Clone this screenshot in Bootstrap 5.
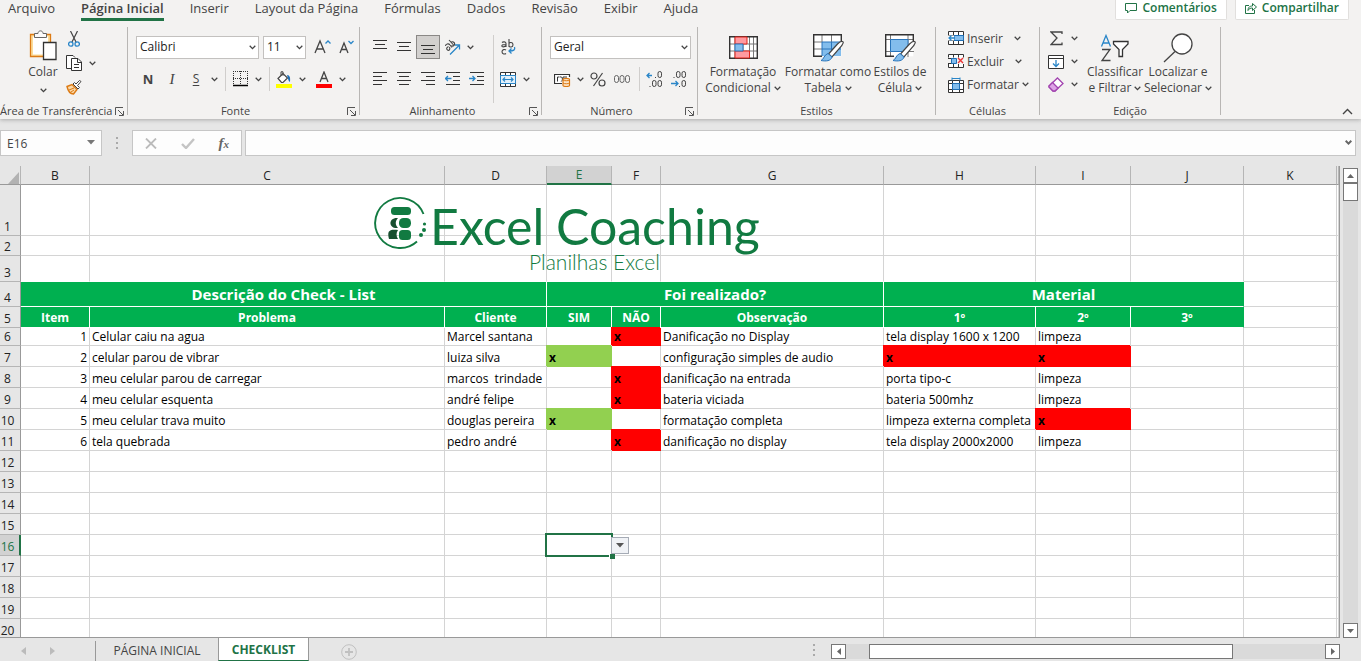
<!DOCTYPE html>
<html lang="pt-BR">
<head>
<meta charset="utf-8">
<meta name="viewport" content="width=device-width, initial-scale=1">
<title>Checklist - Excel Coaching</title>
<link href="https://cdn.jsdelivr.net/npm/bootstrap@5.3.0/dist/css/bootstrap.min.css" rel="stylesheet">
<style>
  :root { --ink:#444; --line:#d4d4d4; --edge:#999; --brand:#217346; --fill:#00b050; }
  body { font-family:"Open Sans","Noto Sans",sans-serif; font-size:12px; line-height:16px; color:var(--ink); background:#e6e6e6; }
  button { border:0; background:none; padding:0; color:inherit; }
  svg { display:block; flex:none; }
  .caret { display:inline-block; width:7px; height:5px; fill:none; stroke:#444; stroke-width:1.3; vertical-align:middle; }

  .ribbon { background:#f3f2f1; box-shadow:0 1px 4px #aaa; height:119px; }
  .menu-tabs { height:26px; }
  .menu-list { gap:26px; }
  .menu-tabs .tab-link { color:var(--ink); text-decoration:none; font-size:13px; line-height:17px; height:21px; white-space:nowrap; }
  .menu-tabs .active-tab { font-weight:600; border-bottom:3px solid var(--brand); }
  .top-btn { background:#fff; border:1px solid #e1dfdd; border-top:0; border-radius:0 0 2px 2px; color:var(--brand); font-weight:600; font-size:12px; height:20px; padding:0 9px 3px; gap:5px; }

  .grp { display:flex; flex-direction:column; flex:none; border-right:1px solid #b8b6b4; height:88px; margin-top:1px; }
  .grp-body { height:76px; display:flex; flex:none; }
  .grp-foot { height:16px; flex:none; display:flex; align-items:center; font-size:11px; position:relative; white-space:nowrap; }
  .grp-foot span { flex:1; text-align:center; }
  .launch { position:absolute; right:3px; bottom:3px; }
  .g-clip { width:128px; } .g-font { width:232px; } .g-align { width:182px; } .g-num { width:156px; }
  .g-style { width:238px; } .g-cell { width:104px; } .g-edit { width:181px; }
  .ico { width:24px; height:24px; display:flex; align-items:center; justify-content:center; flex:none; }
  .drop { width:12px; height:24px; display:flex; align-items:center; justify-content:center; flex:none; }
  .pressed { background:#d2d0ce; border:1px solid #8a8886; }
  .bar-sep { width:1px; background:#d0cecc; margin:0 2px 0 5px; flex:none; }
  .tools { display:flex; align-items:center; height:24px; }
  .picker { position:relative; height:23px; }
  .picker select { appearance:none; width:100%; height:23px; border:1px solid #c3c1bf; border-radius:0; background:#fff; font-size:12px; padding:0 3px; color:#222; display:block; }
  .picker .caret { position:absolute; right:3px; top:9px; pointer-events:none; }
  .p-name { width:123px; } .p-size { width:43px; } .p-num { width:141px; }
  .big { display:flex; flex-direction:column; align-items:center; line-height:16px; white-space:nowrap; font-size:12px; flex:none; }
  .big .pic { height:33px; display:flex; align-items:center; }
  .paste { width:38px; } .paste .pic { height:37px; }
  .w-a { width:82px; } .w-b { width:88px; } .w-c { width:56px; } .w-d { width:62px; } .w-e { width:64px; }
  .line-btn { display:flex; align-items:center; height:23px; gap:3px; }
  .glyph-b { font-size:13px; font-weight:700; } .glyph-i { font-family:"Liberation Serif",serif; font-style:italic; font-size:15px; }
  .glyph-u { font-size:12px; text-decoration:underline; text-underline-offset:2px; }

  .formula { height:26px; margin-top:11px; padding-right:5px; }
  .formula .box { background:#fdfdfd; border:1px solid #c6c6c6; border-radius:0; height:26px; }
  .name-box { width:102px; position:relative; }
  .name-box input { width:80px; border:0; background:none; padding:0 6px; height:24px; color:#444; }
  .name-box svg { position:absolute; right:6px; top:9px; }
  .grip { width:30px; }
  .fx-box { width:110px; }
  .fx { font-family:"Liberation Serif",serif; font-style:italic; font-weight:700; font-size:15px; color:#666; }
  .fx small { font-size:11px; }
  .entry { position:relative; margin-left:3px; }
  .entry input { width:100%; padding:0 6px; }
  .entry .caret { position:absolute; right:4px; top:10px; stroke:#666; stroke-width:2; }

  .work { margin-top:10px; min-height:0; }
  .pane { overflow:hidden; position:relative; border-right:1px solid var(--edge); border-bottom:1px solid var(--edge); background:#fff; min-width:0; }
  .sheet { table-layout:fixed; width:100%; border-collapse:separate; border-spacing:0; color:#000; font-size:12px; }
  .sheet th, .sheet td { padding:0 2px; height:21px; line-height:17px; vertical-align:bottom; border-right:1px solid var(--line); border-bottom:1px solid var(--line); white-space:nowrap; }
  .sheet thead th { height:19px; line-height:16px; background:#e6e6e6; border-right-color:#b5b5b5; border-bottom-color:var(--edge); font-weight:400; text-align:center; color:#222; }
  .sheet tbody th { background:#e6e6e6; border-color:#b5b5b5; border-right-color:var(--edge); font-weight:400; text-align:center; padding:0 5px 0 0; color:#222; }
  .sheet thead th.hot { background:#d2d2d2; color:var(--brand); border-bottom:2px solid var(--brand); }
  .sheet tbody th.hot { background:#d2d2d2; color:var(--brand); border-right:2px solid var(--brand); padding-right:4px; }
  .sheet .c0{width:21px}.sheet .cB{width:69px}.sheet .cC{width:355px}.sheet .cD{width:102px}.sheet .cE{width:65px}.sheet .cF{width:49px}
  .sheet .cG{width:223px}.sheet .cH{width:152px}.sheet .cI{width:95px}.sheet .cJ{width:113px}.sheet .cK{width:93px}
  .sheet .r1 > * { height:51px; } .sheet .r2 > * { height:20px; } .sheet .r3 > * { height:26px; }
  .sheet .r4 > * { height:25px; } .sheet .r6 > * { height:18px; }
  .sheet .r3 td:not(:last-child):not(:nth-last-child(2)) { border-bottom-color:#fff; }
  .sheet td.head { background:var(--fill); color:#fff; border-color:#fff; font-weight:700; text-align:center; }
  .sheet .r4 td.head { font-size:15px; line-height:23px; }
  .sheet .r5 td.head { line-height:18px; }
  .sheet td.no { background:#f00; border-color:#f00; box-shadow:-1px -1px 0 #f00; font-weight:700; }
  .sheet td.yes { background:#92d050; border-color:#92d050; box-shadow:-1px -1px 0 #92d050; font-weight:700; }
  .sheet td.last-head { border-right-color:var(--fill); }
  .cell-host { position:relative; overflow:visible; }
  .cursor-box { position:absolute; left:-2px; top:-2px; right:-2px; bottom:-2px; border:2px solid var(--brand); }
  .cursor-box::after { content:""; position:absolute; right:-4px; bottom:-4px; width:6px; height:6px; background:var(--brand); border-left:1px solid #fff; border-top:1px solid #fff; }
  .cell-drop { position:absolute; left:100%; top:2px; width:18px; height:17px; border:1px solid #a5abb5; background:#f0f2f6; display:flex; align-items:center; justify-content:center; z-index:1; }
  .logo { position:absolute; left:370px; top:28px; }

  .v-scroll { width:21px; padding:2px 3px 0; }
  .sq { width:15px; height:15px; background:#fff; border:1px solid #777; display:flex; align-items:center; justify-content:center; flex:none; }
  .track { background:#dadada; }
  .v-thumb { background:#fff; border:1px solid #777; height:18px; }
  .sheet-bar { height:23px; font-size:12px; }
  .sheet-tab { height:23px; display:flex; align-items:center; justify-content:center; padding-top:2px; color:#444; text-decoration:none; }
  .t-nav { width:96px; padding:0 40px 0 21px; border-right:1px solid var(--edge); margin-top:3px; }
  .t-one { width:122px; }
  .t-two { width:91px; background:#fff; color:var(--brand); font-weight:700; border-left:1px solid var(--edge); border-right:1px solid var(--edge); border-bottom:1px solid var(--brand); }
  .h-scroll { width:509px; margin:6px 21px 0 0; height:15px; }
  .h-thumb { background:#fff; border:1px solid #777; height:15px; margin-left:23px; width:364px; }
</style>
</head>
<body>
<svg width="0" height="0" class="position-absolute" aria-hidden="true">
  <symbol id="car" viewBox="0 0 7 5"><path d="M.7.8 3.5 3.6 6.3.8"/></symbol>
  <symbol id="lau" viewBox="0 0 9 9"><path d="M.5 8V.5H8M3 3l5 5M8.500 4v4.500H4" fill="none" stroke="#555"/></symbol>
</svg>
<div class="d-flex flex-column vh-100 overflow-hidden">
  <header class="ribbon flex-shrink-0 position-relative">
    <nav class="menu-tabs d-flex align-items-start ps-2">
      <div class="menu-list d-flex flex-grow-1">
        <a class="tab-link" href="#">Arquivo</a>
        <a class="tab-link active-tab" href="#">Página Inicial</a>
        <a class="tab-link" href="#">Inserir</a>
        <a class="tab-link" href="#">Layout da Página</a>
        <a class="tab-link" href="#">Fórmulas</a>
        <a class="tab-link" href="#">Dados</a>
        <a class="tab-link" href="#">Revisão</a>
        <a class="tab-link" href="#">Exibir</a>
        <a class="tab-link" href="#">Ajuda</a>
      </div>
      <div class="d-flex gap-2 pe-2 me-1">
        <button class="top-btn d-flex align-items-center"><svg width="12" height="11" fill="none" stroke="#217346"><path d="M.5.5h11v7H5L2.500 10V7.500h-2z"/></svg>Comentários</button>
        <button class="top-btn d-flex align-items-center"><svg width="12" height="12" fill="none" stroke="#217346"><path d="M4 3.500H.5v8h9V8M3 8.500C3 5 5 4 7.500 4V1.500l4 3.500-4 3.500V6C5.500 6 4 6.500 3 8.500z"/></svg>Compartilhar</button>
      </div>
    </nav>
    <div class="d-flex">
      <section class="grp g-clip">
        <div class="grp-body">
          <button class="big paste ms-4"><span class="pic"><svg width="28" height="31" viewBox="0 0 28 31"><path d="M1.500 4.500h20v22h-20z" fill="#fbdc9a" stroke="#dc7a14" stroke-width="1.300"/><path d="M4 6.500h15v18H4z" fill="#fff"/><path d="M5.500 7.500v-4H9C9 0 14 0 14 3.500h3.500v4z" fill="#fafafa" stroke="#666"/><path d="M14.500 12.500h12.500v17H14.500z" fill="#fff" stroke="#333" stroke-width="1.300"/></svg></span>Colar<svg class="caret mt-2"><use href="#car"/></svg></button>
          <div>
            <button class="ico" aria-label="Recortar"><svg width="12" height="17" viewBox="0 0 12 17" fill="none"><path d="M2.500 0l5.500 11M9.500 0L4 11" stroke="#444" stroke-width="1.200"/><circle cx="2.800" cy="13" r="2.200" stroke="#2a86c8" stroke-width="1.300"/><circle cx="9.200" cy="13" r="2.200" stroke="#2a86c8" stroke-width="1.300"/></svg></button>
            <div class="d-flex"><button class="ico" aria-label="Copiar"><svg width="16" height="16" viewBox="0 0 16 16" fill="#fff" stroke="#333"><path d="M5.500 13.500h-5V.5H7l2 2"/><path d="M5.500 3.500H12l3.500 3.500v8.500h-10z"/><path d="M11.500 4v3.500H15M8 9.500h5M8 12.500h5" fill="none"/></svg></button><button class="drop" aria-label="Opções"><svg class="caret"><use href="#car"/></svg></button></div>
            <button class="ico" aria-label="Pincel"><svg width="16" height="15" viewBox="0 0 16 15"><path d="M1 6.500l5-2 5 5-3.500 4.500c-3 0-5.500-3-6.500-7.500z" fill="#fbd9a8" stroke="#dc7a14" stroke-width="1.400"/><path d="M3 10l5-2M5 12l3-2" stroke="#dc7a14"/><path d="M7 4l5 5 1.500-1.500-2-2L15 1.500 13.500.5 10 4 8.500 2.500z" fill="#fff" stroke="#444"/></svg></button>
          </div>
        </div>
        <div class="grp-foot"><span class="pe-3 me-1">Área de Transferência</span><svg class="launch" width="9" height="9"><use href="#lau"/></svg></div>
      </section>

      <section class="grp g-font">
        <div class="grp-body flex-column ps-2 pt-2">
          <div class="tools">
            <div class="picker p-name me-1"><select aria-label="Fonte"><option>Calibri</option></select><svg class="caret"><use href="#car"/></svg></div>
            <div class="picker p-size me-1"><select aria-label="Tamanho"><option>11</option></select><svg class="caret"><use href="#car"/></svg></div>
            <button class="ico" aria-label="Aumentar fonte"><svg width="17" height="16" fill="none"><path d="M1 14L6 2l5 12M2.800 10h6.400" stroke="#444" stroke-width="1.300"/><path d="M11.500 4.500L14 2l2.500 2.500" stroke="#2a86c8" stroke-width="1.300"/></svg></button>
            <button class="ico" aria-label="Diminuir fonte"><svg width="15" height="16" fill="none"><path d="M1 14L5 4l4 10M2.500 10.500h5" stroke="#444" stroke-width="1.300"/><path d="M9.500 2L12 4.500 14.500 2" stroke="#2a86c8" stroke-width="1.300"/></svg></button>
          </div>
          <div class="tools mt-2">
            <button class="ico glyph-b">N</button><button class="ico glyph-i">I</button><button class="ico glyph-u">S</button><button class="drop" aria-label="Opções"><svg class="caret"><use href="#car"/></svg></button>
            <i class="bar-sep align-self-stretch"></i>
            <button class="ico" aria-label="Bordas"><svg width="15" height="16" fill="none" stroke="#333"><path d="M.5 0v13M14.500 0v13M7.500 0v13M0 .5h15M0 7.500h15" stroke-dasharray="1 1"/><path d="M0 14.500h15" stroke="#000" stroke-width="1.500"/></svg></button><button class="drop" aria-label="Opções"><svg class="caret"><use href="#car"/></svg></button>
            <i class="bar-sep align-self-stretch"></i>
            <button class="ico" aria-label="Preenchimento"><svg width="16" height="17"><path d="M2 7.500L7 2.500l4.500 4.500L7 11.500H5.500z" fill="#fff" stroke="#444" stroke-width="1.200"/><path d="M5 4.500V.8h2v4" fill="none" stroke="#444"/><path d="M11 4c3 0 3.500 3 3 7-2-1-2-4-3-7z" fill="#1f6fb5"/><path d="M0 13h16v4H0z" fill="#ff0"/></svg></button><button class="drop" aria-label="Opções"><svg class="caret"><use href="#car"/></svg></button>
            <button class="ico ms-1" aria-label="Cor da fonte"><svg width="16" height="17"><path d="M4 11L8 1l4 10M5.500 7.500h5" fill="none" stroke="#444" stroke-width="1.300"/><path d="M0 13h16v4H0z" fill="red"/></svg></button><button class="drop" aria-label="Opções"><svg class="caret"><use href="#car"/></svg></button>
          </div>
        </div>
        <div class="grp-foot"><span class="pe-3">Fonte</span><svg class="launch" width="9" height="9"><use href="#lau"/></svg></div>
      </section>

      <section class="grp g-align">
        <div class="grp-body ps-2 pt-2">
          <div>
            <div class="tools">
              <button class="ico" aria-label="Superior"><svg width="14" height="16" stroke="#333"><path d="M0 1.500h14M2 5.500h10M0 9.500h14"/></svg></button>
              <button class="ico" aria-label="Meio"><svg width="14" height="16" stroke="#333"><path d="M0 3.500h14M2 7.500h10M0 11.500h14"/></svg></button>
              <button class="ico pressed" aria-label="Inferior"><svg width="14" height="16" stroke="#333"><path d="M0 6.500h14M2 10.500h10M0 14.500h14"/></svg></button>
              <button class="ico" aria-label="Orientação"><svg width="17" height="16" fill="none"><g stroke="#444" stroke-width="1.100"><path d="M1.500 7c0-2 3-3 4.500-1l2 2.500M4.500 7.500c-2 1-2.500 2.500-1 3.500s3-.5 2-3"/><path d="M5 1l5 5.500M7 3.500c2-2 5 1 3 3-1 .8-2 .5-2.500 0"/></g><path d="M6 15.500L15.500 6M11 6h4.500v4.500" stroke="#2a86c8" stroke-width="1.300"/></svg></button><button class="drop" aria-label="Opções"><svg class="caret"><use href="#car"/></svg></button>
            </div>
            <div class="tools mt-2">
              <button class="ico" aria-label="Esquerda"><svg width="14" height="14" stroke="#333"><path d="M0 .5h14M0 4.500h9M0 8.500h14M0 12.500h9"/></svg></button>
              <button class="ico" aria-label="Centro"><svg width="14" height="14" stroke="#333"><path d="M0 .5h14M2 4.500h10M0 8.500h14M2 12.500h10"/></svg></button>
              <button class="ico" aria-label="Direita"><svg width="14" height="14" stroke="#333"><path d="M0 .5h14M5 4.500h9M0 8.500h14M5 12.500h9"/></svg></button>
              <button class="ico" aria-label="Diminuir recuo"><svg width="15" height="14" stroke="#333" fill="none"><path d="M1 .5h14M8 4.500h7M8 8.500h7M1 12.500h14"/><path d="M6.500 6.500h-6M3 4L.5 6.500 3 9" stroke="#2a86c8" stroke-width="1.300"/></svg></button>
              <button class="ico" aria-label="Aumentar recuo"><svg width="15" height="14" stroke="#333" fill="none"><path d="M1 .5h14M8 4.500h7M8 8.500h7M1 12.500h14"/><path d="M0 6.500h6M3.500 4L6 6.500 3.500 9" stroke="#2a86c8" stroke-width="1.300"/></svg></button>
            </div>
          </div>
          <i class="bar-sep"></i>
          <div>
            <div class="tools"><button class="ico" aria-label="Quebrar texto"><svg width="15" height="16" fill="none"><g stroke="#444" stroke-width="1.100"><path d="M1 3.500c1-1 4-1 4 1V8M5 5.500C2 5.500.8 6 .8 7S3.500 8.500 5 6.500M8 0v8M8 4.500c.5-1.500 4-1.500 4 1.200s-3.500 3-4 1.200M5 11c-1-.8-4-.8-4 1.800s3 2.600 4 1.700"/></g><path d="M13.500 8c1 3-1 4-5 4M10.500 9.500L8 12l2.500 2.500" stroke="#2a86c8" stroke-width="1.300"/></svg></button></div>
            <div class="tools mt-2"><button class="ico" aria-label="Mesclar"><svg width="16" height="15" fill="#fff" stroke="#333"><path d="M.5.5h15v14H.5zM5.500 0v3M10.500 0v3M5.500 12v3M10.500 12v3"/><path d="M.5 3.500h15v8H.5z" fill="#e3f1fb" stroke="#2a86c8"/><path d="M3 7.500h10M5 5.500l-2 2 2 2M11 5.500l2 2-2 2" stroke="#2a86c8" stroke-width="1.200" fill="none"/></svg></button><button class="drop" aria-label="Opções"><svg class="caret"><use href="#car"/></svg></button></div>
          </div>
        </div>
        <div class="grp-foot"><span class="pe-3">Alinhamento</span><svg class="launch" width="9" height="9"><use href="#lau"/></svg></div>
      </section>

      <section class="grp g-num">
        <div class="grp-body flex-column ps-2 pt-2">
          <div class="tools"><div class="picker p-num"><select aria-label="Formato"><option>Geral</option></select><svg class="caret"><use href="#car"/></svg></div></div>
          <div class="tools mt-2">
            <button class="ico" aria-label="Moeda"><svg width="17" height="15" viewBox="0 0 17 15"><path d="M15.500 5V2.500H.5v9H8" fill="#fff" stroke="#333" stroke-width="1.200"/><path d="M5.500 5h-2v4.500M6 5c3-1 3 4 1 4.500M9 8V5h4" fill="none" stroke="#333"/><path d="M9 7.500c0-1.500 6.500-1.500 6.500 0v6c0 1.300-6.500 1.300-6.500 0z" fill="#fce5c8" stroke="#dc7a14" stroke-width="1.200"/><path d="M9 8c1 1 5.500 1 6.500 0M9 11c1 1 5.500 1 6.500 0" stroke="#dc7a14" fill="none"/></svg></button><button class="drop" aria-label="Opções"><svg class="caret"><use href="#car"/></svg></button>
            <button class="ico" aria-label="Porcentagem"><svg width="16" height="15" fill="none" stroke="#444" stroke-width="1.200"><circle cx="4" cy="4" r="3"/><circle cx="12" cy="11" r="3"/><path d="M12.500 1L3.500 14"/></svg></button>
            <button class="ico" aria-label="Milhar"><svg width="16" height="9" fill="none" stroke="#666"><rect x=".5" y=".5" width="4" height="7" rx="2"/><rect x="6" y=".5" width="4" height="7" rx="2"/><rect x="11.500" y=".5" width="4" height="7" rx="2"/></svg></button>
            <i class="bar-sep align-self-stretch"></i>
            <button class="ico" aria-label="Aumentar casas"><svg width="17" height="16" fill="none" stroke="#444"><path d="M6 4.500H1M3.500 2L1 4.500 3.500 7" stroke="#2a86c8" stroke-width="1.300"/><rect x="12" y=".5" width="3.500" height="6" rx="1.700"/><rect x="6.500" y="9.500" width="3.500" height="6" rx="1.700"/><rect x="12" y="9.500" width="3.500" height="6" rx="1.700"/><path d="M9.500 6v1M4 15v1"/></svg></button>
            <button class="ico" aria-label="Diminuir casas"><svg width="17" height="16" fill="none" stroke="#444"><path d="M1 12.500h7M5.500 10L8 12.500 5.500 15" stroke="#2a86c8" stroke-width="1.300"/><rect x="6.500" y=".5" width="3.500" height="6" rx="1.700"/><rect x="12" y=".5" width="3.500" height="6" rx="1.700"/><rect x="12" y="9.500" width="3.500" height="6" rx="1.700"/><path d="M4 6v1M9.500 15v1"/></svg></button>
          </div>
        </div>
        <div class="grp-foot"><span class="pe-3">Número</span><svg class="launch" width="9" height="9"><use href="#lau"/></svg></div>
      </section>

      <section class="grp g-style">
        <div class="grp-body ps-1 pt-1">
          <button class="big w-a"><span class="pic"><svg width="29" height="23" viewBox="0 0 29 23"><path d="M.7.7h27.600v21.600H.7z" fill="#fff"/><path d="M6 0v23M14 0v23M20.500 0v23M24.500 0v23M0 8h29M0 15h29" stroke="#777"/><path d="M.7.7h27.600v21.600H.7z" fill="none" stroke="#333" stroke-width="1.400"/><path d="M6 1h12v7H6zM6 15h14.500v7H6z" fill="#ff9aa0" stroke="#e0241b"/><path d="M6 8h8v7H6z" fill="#83bdec" stroke="#2a75bb"/></svg></span><span>Formatação</span><span>Condicional <svg class="caret"><use href="#car"/></svg></span></button>
          <button class="big w-b"><span class="pic"><svg width="31" height="28" viewBox="0 0 31 28"><path d="M.7.7h27.600v21.600H.7z" fill="#fff"/><path d="M9 8h19v14H9z" fill="#83bdec"/><path d="M9 0v8M18.500 0v8M0 8h9M0 15h9" stroke="#777"/><path d="M9 22V8h19M18.500 8v14M9 15h19" stroke="#2a75bb" fill="none"/><path d="M28.300 8V.7H.7v21.600H9" fill="none" stroke="#333" stroke-width="1.400"/><path d="M29.500 7.500c1.500.5.5 2-1 4.500L19 23l-3.500-3 9-10c2-2 3.500-3 5-2.500z" fill="#fff" stroke="#444" stroke-width="1.200"/><path d="M15 19.500l4 3.500c-1 4-6 4.500-11 3.500 3-1 3-6 7-7z" fill="#83bdec" stroke="#2a75bb"/></svg></span><span>Formatar como</span><span>Tabela <svg class="caret"><use href="#car"/></svg></span></button>
          <button class="big w-c"><span class="pic"><svg width="31" height="28" viewBox="0 0 31 28"><path d="M.7.7h27.600v21.600H.7z" fill="#fff"/><path d="M5.500 0v23M23 0v23M0 5.500h29M0 17.500h29" stroke="#777"/><path d="M5.500 5.500H23v12H5.500z" fill="#83bdec" stroke="#2a75bb"/><path d="M28.300 8V.7H.7v21.600H9" fill="none" stroke="#333" stroke-width="1.400"/><path d="M29.500 7.500c1.500.5.5 2-1 4.500L19 23l-3.500-3 9-10c2-2 3.500-3 5-2.500z" fill="#fff" stroke="#444" stroke-width="1.200"/><path d="M15 19.500l4 3.500c-1 4-6 4.500-11 3.500 3-1 3-6 7-7z" fill="#83bdec" stroke="#2a75bb"/></svg></span><span>Estilos de</span><span>Célula <svg class="caret"><use href="#car"/></svg></span></button>
        </div>
        <div class="grp-foot"><span>Estilos</span></div>
      </section>

      <section class="grp g-cell">
        <div class="grp-body flex-column ps-2 ms-0">
          <button class="line-btn ps-1"><svg width="16" height="15" fill="#fff" stroke="#333"><path d="M.5.5h15v13H.5zM5.500.5v13M10.500.5v13M0 4.500h16M0 9.500h16"/><path d="M6 4.500h9.500v5H6z" fill="#83bdec" stroke="#1f6fb5"/><path d="M0 4.500h6v5H0z" stroke="none"/><path d="M7 7H1M3.500 4.500L1 7l2.500 2.500" stroke="#2a86c8" stroke-width="1.300" fill="none"/></svg>Inserir <svg class="caret ms-2"><use href="#car"/></svg></button>
          <button class="line-btn ps-1"><svg width="16" height="15" fill="#fff" stroke="#333"><path d="M.5 3.500v-3h15v3M.5 10v3.500h15V10M5.500.5v3M10.500.5v3M5.500 10v3.500M10.500 10v3.500M0 4.500h4M0 9.500h4"/><path d="M3.500 4.500h5v5h-5z" fill="#83bdec" stroke="#1f6fb5"/><path d="M10 4l5 5M15 4l-5 5" stroke="#e33" stroke-width="1.400"/></svg>Excluir <svg class="caret ms-2"><use href="#car"/></svg></button>
          <button class="line-btn ps-1"><svg width="16" height="16" fill="#fff" stroke="#333"><path d="M.5 3.500h15v12H.5zM4.500 3.500v12M11.500 3.500v12M0 6.500h16M0 12.500h16"/><path d="M4.500 6.500h7v6h-7z" fill="#83bdec" stroke="#1f6fb5"/><path d="M4 .5v3M12 .5v3M4 1.500h8" stroke="#2a86c8"/></svg>Formatar<svg class="caret"><use href="#car"/></svg></button>
        </div>
        <div class="grp-foot"><span>Células</span></div>
      </section>

      <section class="grp g-edit">
        <div class="grp-body ps-1">
          <div>
            <div class="line-btn gap-0"><button class="ico" aria-label="Soma"><svg width="13" height="15" fill="none" stroke="#444" stroke-width="1.300"><path d="M12 3V1H1l6 6-6 6.500h11v-2"/></svg></button><button class="drop" aria-label="Opções"><svg class="caret"><use href="#car"/></svg></button></div>
            <div class="line-btn gap-0"><button class="ico" aria-label="Preencher"><svg width="16" height="14" fill="#fff" stroke="#333"><path d="M.5.500h15v13H.5zM0 3.500h16"/><path d="M8 5v6M5 8.500l3 3 3-3" fill="none" stroke="#2a86c8" stroke-width="1.300"/></svg></button><button class="drop" aria-label="Opções"><svg class="caret"><use href="#car"/></svg></button></div>
            <div class="line-btn gap-0"><button class="ico" aria-label="Limpar"><svg width="16" height="15" stroke="#a244b0" stroke-width="1.300"><path d="M9.500 1L15 6.500 7 14H5L1 10V9z" fill="#fff"/><path d="M4.500 5.500L10 11l-3 3H5L1 10V9z" fill="#dda3e6"/></svg></button><button class="drop" aria-label="Opções"><svg class="caret"><use href="#car"/></svg></button></div>
          </div>
          <button class="big w-d ms-1 pt-1"><span class="pic"><svg width="30" height="28" fill="none" stroke-width="1.300"><path d="M1.500 12.500l4.500-11 4.500 11M3 9h6" stroke="#2a86c8"/><path d="M2 15.500h8L2 26.500h8.500" stroke="#444"/><path d="M13.500 7.500h14.500v2.500l-5.500 5.500v7h-3.500v-7L13.500 10z" fill="#fff" stroke="#333"/></svg></span><span>Classificar</span><span>e Filtrar <svg class="caret"><use href="#car"/></svg></span></button>
          <button class="big w-e pt-1"><span class="pic"><svg width="30" height="30" stroke="#444" stroke-width="1.300"><circle cx="19" cy="11" r="10" fill="#fff"/><path d="M12 18.500L1 29"/></svg></span><span>Localizar e</span><span>Selecionar <svg class="caret"><use href="#car"/></svg></span></button>
        </div>
        <div class="grp-foot"><span>Edição</span></div>
      </section>
      <button class="ms-auto me-2 align-self-end" aria-label="Recolher"><svg width="11" height="7" fill="none" stroke="#444" stroke-width="1.400"><path d="M1 6l4.500-4.500L10 6"/></svg></button>
    </div>
  </header>

  <div class="formula d-flex flex-shrink-0">
    <div class="box name-box"><input aria-label="Caixa de nome" value="E16"><svg width="8" height="5"><path d="M0 0h8L4 4.500z" fill="#777"/></svg></div>
    <div class="grip d-flex align-items-center justify-content-center"><svg width="2" height="12" fill="#aaa"><path d="M0 0h2v2H0zM0 5h2v2H0zM0 10h2v2H0z"/></svg></div>
    <div class="box fx-box d-flex align-items-center justify-content-around">
      <button aria-label="Cancelar"><svg width="12" height="11" stroke="#bbb" stroke-width="1.800"><path d="M1 .5l10 10M11 .5l-10 10"/></svg></button>
      <button aria-label="Inserir"><svg width="14" height="11" fill="none" stroke="#c4c4c4" stroke-width="2.400"><path d="M1 6l4 4 8-9"/></svg></button>
      <button class="fx">f<small>x</small></button>
    </div>
    <div class="entry flex-grow-1"><input class="box" aria-label="Barra de fórmulas"><svg class="caret"><use href="#car"/></svg></div>
  </div>

  <main class="work d-flex flex-grow-1">
    <div class="pane flex-grow-1">
      <table class="sheet">
        <colgroup><col class="c0"><col class="cB"><col class="cC"><col class="cD"><col class="cE"><col class="cF"><col class="cG"><col class="cH"><col class="cI"><col class="cJ"><col class="cK"><col></colgroup>
        <thead><tr><th class="p-0"><svg class="ms-2" width="11" height="14"><path d="M11 2v12H0z" fill="#b2b2b2"/></svg></th><th>B</th><th>C</th><th>D</th><th class="hot">E</th><th>F</th><th>G</th><th>H</th><th>I</th><th>J</th><th>K</th><th></th></tr></thead>
        <tbody>
          <tr class="r1"><th>1</th><td></td><td></td><td></td><td></td><td></td><td></td><td></td><td></td><td></td><td></td><td></td></tr>
          <tr class="r2"><th>2</th><td></td><td></td><td></td><td></td><td></td><td></td><td></td><td></td><td></td><td></td><td></td></tr>
          <tr class="r3"><th>3</th><td></td><td></td><td></td><td></td><td></td><td></td><td></td><td></td><td></td><td></td><td></td></tr>
          <tr class="r4"><th>4</th><td class="head" colspan="3">Descrição do Check - List</td><td class="head" colspan="3">Foi realizado?</td><td class="head last-head" colspan="3">Material</td><td></td><td></td></tr>
          <tr class="r5"><th>5</th><td class="head">Item</td><td class="head">Problema</td><td class="head">Cliente</td><td class="head">SIM</td><td class="head">NÃO</td><td class="head">Observação</td><td class="head">1º</td><td class="head">2º</td><td class="head last-head">3º</td><td></td><td></td></tr>
          <tr class="r6"><th>6</th><td class="text-end">1</td><td>Celular caiu na agua</td><td>Marcel santana</td><td></td><td class="no">x</td><td>Danificação no Display</td><td>tela display 1600 x 1200</td><td>limpeza</td><td></td><td></td><td></td></tr>
          <tr><th>7</th><td class="text-end">2</td><td>celular parou de vibrar</td><td>luiza silva</td><td class="yes">x</td><td></td><td>configuração simples de audio</td><td class="no">x</td><td class="no">x</td><td></td><td></td><td></td></tr>
          <tr><th>8</th><td class="text-end">3</td><td>meu celular parou de carregar</td><td>marcos&nbsp; trindade</td><td></td><td class="no">x</td><td>danificação na entrada</td><td>porta tipo-c</td><td>limpeza</td><td></td><td></td><td></td></tr>
          <tr><th>9</th><td class="text-end">4</td><td>meu celular esquenta</td><td>andré felipe</td><td></td><td class="no">x</td><td>bateria viciada</td><td>bateria 500mhz</td><td>limpeza</td><td></td><td></td><td></td></tr>
          <tr><th>10</th><td class="text-end">5</td><td>meu celular trava muito</td><td>douglas pereira</td><td class="yes">x</td><td></td><td>formatação completa</td><td>limpeza externa completa</td><td class="no">x</td><td></td><td></td><td></td></tr>
          <tr><th>11</th><td class="text-end">6</td><td>tela quebrada</td><td>pedro andré</td><td></td><td class="no">x</td><td>danificação no display</td><td>tela display 2000x2000</td><td>limpeza</td><td></td><td></td><td></td></tr>
          <tr><th>12</th><td></td><td></td><td></td><td></td><td></td><td></td><td></td><td></td><td></td><td></td><td></td></tr>
          <tr><th>13</th><td></td><td></td><td></td><td></td><td></td><td></td><td></td><td></td><td></td><td></td><td></td></tr>
          <tr><th>14</th><td></td><td></td><td></td><td></td><td></td><td></td><td></td><td></td><td></td><td></td><td></td></tr>
          <tr><th>15</th><td></td><td></td><td></td><td></td><td></td><td></td><td></td><td></td><td></td><td></td><td></td></tr>
          <tr><th class="hot">16</th><td></td><td></td><td></td><td class="cell-host"><div class="cursor-box"></div><button class="cell-drop" aria-label="Abrir lista"><svg width="8" height="5"><path d="M0 0h8L4 4.500z" fill="#555"/></svg></button></td><td></td><td></td><td></td><td></td><td></td><td></td><td></td></tr>
          <tr><th>17</th><td></td><td></td><td></td><td></td><td></td><td></td><td></td><td></td><td></td><td></td><td></td></tr>
          <tr><th>18</th><td></td><td></td><td></td><td></td><td></td><td></td><td></td><td></td><td></td><td></td><td></td></tr>
          <tr><th>19</th><td></td><td></td><td></td><td></td><td></td><td></td><td></td><td></td><td></td><td></td><td></td></tr>
          <tr><th>20</th><td></td><td></td><td></td><td></td><td></td><td></td><td></td><td></td><td></td><td></td><td></td></tr>
        </tbody>
      </table>
      <svg class="logo" width="400" height="84" viewBox="0 0 400 84" fill="#117a41">
        <path d="M53.500 20A25 25 0 1 0 47 47.500" fill="none" stroke="#117a41" stroke-width="1.900"/>
        <rect x="21" y="13" width="20" height="8" rx="3.500"/>
        <path d="M28 24c-10-1-10 11 0 10-3-3-3-7 0-10zM28 36c-9-1-11 1-9 9h9c-2-3-2-6 0-9z" fill="#174f2f"/>
        <rect x="29" y="24" width="12" height="10" rx="4.500"/><rect x="29" y="36" width="12" height="10" rx="3.500"/>
        <circle cx="54.500" cy="30" r="1.600"/><circle cx="54" cy="36" r="2"/><circle cx="51" cy="41" r="2"/>
        <text x="60" y="51" font-family="Lato, sans-serif" font-size="50">Excel</text>
        <text x="186" y="51" font-family="Lato, sans-serif" font-size="50">Coaching</text>
        <text x="159" y="76" font-family="Lato, sans-serif" font-size="21" font-weight="300">Planilhas Excel</text>
      </svg>
    </div>
    <div class="v-scroll d-flex flex-column">
      <button class="sq" aria-label="Acima"><svg width="7" height="4"><path d="M0 4h7L3.500 0z" fill="#666"/></svg></button>
      <div class="track flex-grow-1"><div class="v-thumb"></div></div>
      <button class="sq" aria-label="Abaixo"><svg width="7" height="4"><path d="M0 0h7L3.500 4z" fill="#666"/></svg></button>
    </div>
  </main>

  <footer class="sheet-bar d-flex flex-shrink-0">
    <div class="t-nav d-flex align-items-center justify-content-between"><svg width="5" height="8"><path d="M5 0v8L0 4z" fill="#bbb"/></svg><svg width="5" height="8"><path d="M0 0v8l5-4z" fill="#bbb"/></svg></div>
    <a class="sheet-tab t-one" href="#">PÁGINA INICIAL</a>
    <a class="sheet-tab t-two" href="#">CHECKLIST</a>
    <button class="ms-4 ps-2 pt-1" aria-label="Nova planilha"><svg width="16" height="16" fill="none" stroke="#c0c0c0"><circle cx="8" cy="8" r="7.300"/><path d="M8 4v8M4 8h8" stroke-width="1.800"/></svg></button>
    <div class="ms-auto d-flex align-items-center pe-3"><svg width="2" height="12" fill="#aaa"><path d="M0 0h2v2H0zM0 5h2v2H0zM0 10h2v2H0z"/></svg></div>
    <div class="h-scroll d-flex">
      <button class="sq" aria-label="Esquerda"><svg width="4" height="7"><path d="M4 0v7L0 3.500z" fill="#666"/></svg></button>
      <div class="track flex-grow-1"><div class="h-thumb"></div></div>
      <button class="sq" aria-label="Direita"><svg width="4" height="7"><path d="M0 0v7l4-3.500z" fill="#666"/></svg></button>
    </div>
  </footer>
</div>
<script src="https://cdn.jsdelivr.net/npm/bootstrap@5.3.0/dist/js/bootstrap.bundle.min.js"></script>
</body>
</html>
